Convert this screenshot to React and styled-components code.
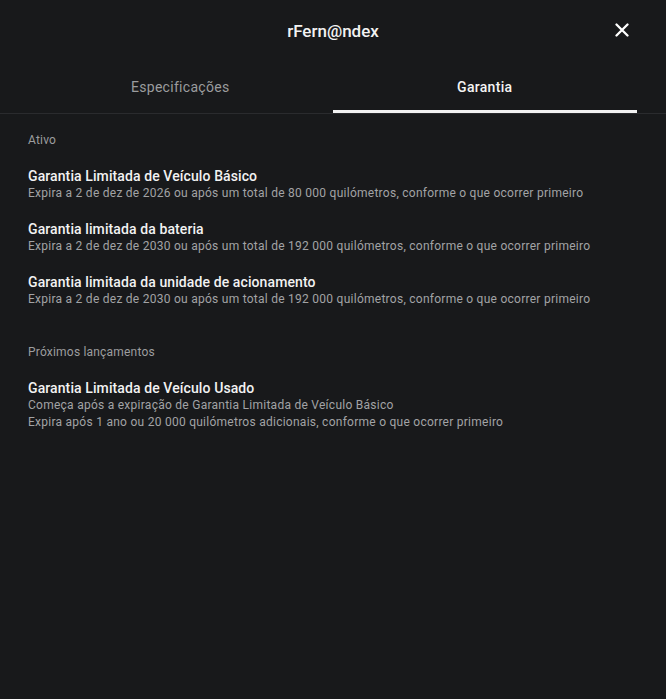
import React from 'react'
import styled, { createGlobalStyle } from 'styled-components'

const Global = createGlobalStyle`
  html, body {
    margin: 0;
    padding: 0;
    background: #18191b;
  }
  body {
    font-family: Roboto, "Liberation Sans", sans-serif;
    -webkit-font-smoothing: antialiased;
  }
`

const Page = styled.div`
  width: 666px;
  height: 699px;
  background: #18191b;
  display: flex;
  flex-direction: column;
`

const Header = styled.div`
  height: 63px;
  display: flex;
  align-items: center;
  justify-content: center;
  position: relative;
`

const Title = styled.div`
  font-size: 17px;
  font-weight: 500;
  color: #f2f2f2;
  margin-top: -1px;
`

const Close = styled.button`
  position: absolute;
  right: 36px;
  top: 22px;
  width: 16px;
  height: 16px;
  padding: 0;
  border: none;
  background: none;
  display: flex;
  align-items: center;
  justify-content: center;
`

const Tabs = styled.div`
  display: flex;
  padding: 0 29px 0 28px;
  border-bottom: 1px solid #2a2b2e;
`

const Tab = styled.div`
  flex: 1;
  height: 50px;
  box-sizing: border-box;
  padding-bottom: 2px;
  display: flex;
  align-items: center;
  justify-content: center;
  font-size: 14px;
  font-weight: ${p => p.active ? 500 : 400};
  letter-spacing: 0.3px;
  color: ${p => p.active ? '#f4f4f4' : '#9b9c9e'};
  box-shadow: ${p => p.active ? 'inset 0 -3px 0 #f2f2f2' : 'none'};
`

const Content = styled.div`
  padding: 0 28px;
  display: flex;
  flex-direction: column;
`

const Section = styled.div`
  display: flex;
  flex-direction: column;
  gap: 18px;
  padding-top: 18px;
  & + & {
    margin-top: 18px;
  }
`

const SectionLabel = styled.div`
  font-size: 12px;
  color: #9c9d9f;
  line-height: 16px;
  letter-spacing: 0.2px;
  margin-bottom: 1px;
`

const Item = styled.div`
  display: flex;
  flex-direction: column;
`

const ItemTitle = styled.div`
  font-size: 14px;
  font-weight: 500;
  color: #f2f2f2;
  line-height: 18px;
  letter-spacing: 0.1px;
`

const ItemLine = styled.div`
  font-size: 12px;
  color: #a2a3a5;
  line-height: 17px;
  letter-spacing: 0.26px;
`

const sections = [
  {
    label: 'Ativo',
    items: [
      {
        title: 'Garantia Limitada de Veículo Básico',
        lines: ['Expira a 2 de dez de 2026 ou após um total de 80 000 quilómetros, conforme o que ocorrer primeiro']
      },
      {
        title: 'Garantia limitada da bateria',
        lines: ['Expira a 2 de dez de 2030 ou após um total de 192 000 quilómetros, conforme o que ocorrer primeiro']
      },
      {
        title: 'Garantia limitada da unidade de acionamento',
        lines: ['Expira a 2 de dez de 2030 ou após um total de 192 000 quilómetros, conforme o que ocorrer primeiro']
      }
    ]
  },
  {
    label: 'Próximos lançamentos',
    items: [
      {
        title: 'Garantia Limitada de Veículo Usado',
        lines: [
          'Começa após a expiração de Garantia Limitada de Veículo Básico',
          'Expira após 1 ano ou 20 000 quilómetros adicionais, conforme o que ocorrer primeiro'
        ]
      }
    ]
  }
]

const App = () => (
  <Page>
    <Global />
    <Header>
      <Title>rFern@ndex</Title>
      <Close aria-label='Fechar'>
        <svg width='14' height='14' viewBox='0 0 14 14'>
          <path d='M1.5 1.5 L12.5 12.5 M12.5 1.5 L1.5 12.5' stroke='#fff' strokeWidth='2.3' strokeLinecap='round' />
        </svg>
      </Close>
    </Header>
    <Tabs>
      <Tab>Especificações</Tab>
      <Tab active>Garantia</Tab>
    </Tabs>
    <Content>
      {
        sections.map(({ label, items }) => (
          <Section key={label}>
            <SectionLabel>{label}</SectionLabel>
            {
              items.map(({ title, lines }) => (
                <Item key={title}>
                  <ItemTitle>{title}</ItemTitle>
                  {lines.map(line => <ItemLine key={line}>{line}</ItemLine>)}
                </Item>
              ))
            }
          </Section>
        ))
      }
    </Content>
  </Page>
)

export default App
